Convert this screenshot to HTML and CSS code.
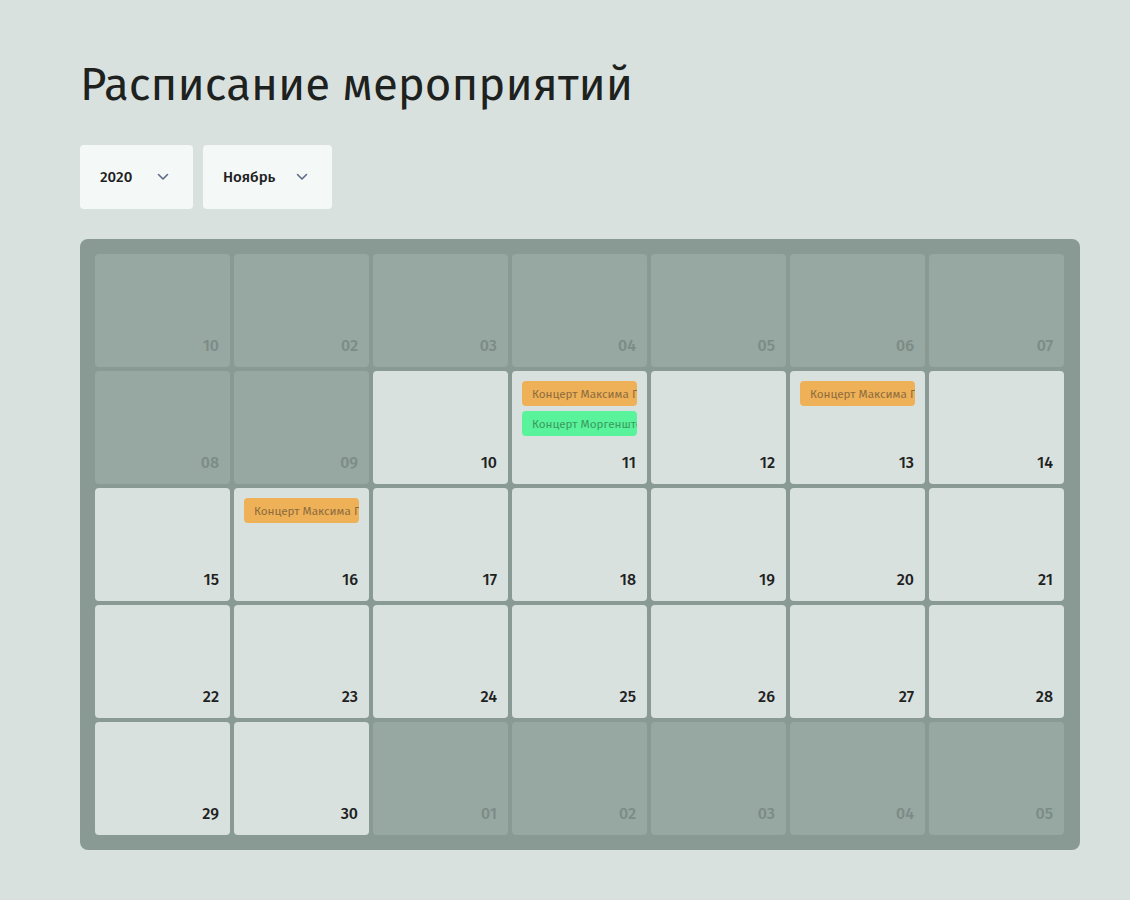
FILE: index.html
```html
<!DOCTYPE html>
<html lang="ru">
<head>
<meta charset="utf-8">
<title>Расписание мероприятий</title>
<link rel="stylesheet" href="styles.css">
</head>
<body>
<main class="page">
  <h1 class="title">Расписание мероприятий</h1>
  <div class="filters">
    <div class="select select-year"><span>2020</span>
      <svg class="chev" width="12" height="8" viewBox="0 0 12 8"><path d="M1.5 1.5 6 6l4.5-4.5" fill="none" stroke="currentColor" stroke-width="1.6" stroke-linecap="round" stroke-linejoin="round"/></svg>
    </div>
    <div class="select select-month"><span>Ноябрь</span>
      <svg class="chev" width="12" height="8" viewBox="0 0 12 8"><path d="M1.5 1.5 6 6l4.5-4.5" fill="none" stroke="currentColor" stroke-width="1.6" stroke-linecap="round" stroke-linejoin="round"/></svg>
    </div>
  </div>
  <div class="calendar">
    <div class="cell dim"><span class="num">10</span></div>
    <div class="cell dim"><span class="num">02</span></div>
    <div class="cell dim"><span class="num">03</span></div>
    <div class="cell dim"><span class="num">04</span></div>
    <div class="cell dim"><span class="num">05</span></div>
    <div class="cell dim"><span class="num">06</span></div>
    <div class="cell dim"><span class="num">07</span></div>

    <div class="cell dim"><span class="num">08</span></div>
    <div class="cell dim"><span class="num">09</span></div>
    <div class="cell"><span class="num">10</span></div>
    <div class="cell"><div class="event orange">Концерт Максима Галкина</div><div class="event green">Концерт Моргенштерна</div><span class="num">11</span></div>
    <div class="cell"><span class="num">12</span></div>
    <div class="cell"><div class="event orange">Концерт Максима Галкина</div><span class="num">13</span></div>
    <div class="cell"><span class="num">14</span></div>

    <div class="cell"><span class="num">15</span></div>
    <div class="cell"><div class="event orange">Концерт Максима Галкина</div><span class="num">16</span></div>
    <div class="cell"><span class="num">17</span></div>
    <div class="cell"><span class="num">18</span></div>
    <div class="cell"><span class="num">19</span></div>
    <div class="cell"><span class="num">20</span></div>
    <div class="cell"><span class="num">21</span></div>

    <div class="cell"><span class="num">22</span></div>
    <div class="cell"><span class="num">23</span></div>
    <div class="cell"><span class="num">24</span></div>
    <div class="cell"><span class="num">25</span></div>
    <div class="cell"><span class="num">26</span></div>
    <div class="cell"><span class="num">27</span></div>
    <div class="cell"><span class="num">28</span></div>

    <div class="cell"><span class="num">29</span></div>
    <div class="cell"><span class="num">30</span></div>
    <div class="cell dim"><span class="num">01</span></div>
    <div class="cell dim"><span class="num">02</span></div>
    <div class="cell dim"><span class="num">03</span></div>
    <div class="cell dim"><span class="num">04</span></div>
    <div class="cell dim"><span class="num">05</span></div>
  </div>
</main>
</body>
</html>
```

FILE: styles.css
```css
* { box-sizing: border-box; }
html, body { margin: 0; padding: 0; }
body {
  background: #d9e1df;
  font-family: "Fira Sans", Roboto, "Noto Sans", sans-serif;
  color: #1e221e;
}
.page {
  width: 1000px;
  margin-left: 80px;
  padding-top: 57px;
}
.title {
  margin: 0;
  font-size: 45.6px;
  font-weight: 400;
  line-height: 56px;
  color: #1e221e;
}
.filters {
  display: flex;
  gap: 10px;
  margin-top: 32px;
}
.select {
  height: 64px;
  background: #f4f8f7;
  border-radius: 4px;
  display: flex;
  align-items: center;
  padding-left: 20px;
  font-size: 15px;
  font-weight: 500;
  color: #1e221e;
}
.select-year { width: 113px; }
.select-month { width: 129px; }
.chev { color: #5b6b88; margin-left: auto; margin-right: 24px; }
.calendar {
  margin-top: 30px;
  background: #899a94;
  border-radius: 8px;
  padding: 15px 16px 15px 15px;
  display: grid;
  grid-template-columns: repeat(7, 135px);
  grid-auto-rows: 113px;
  gap: 4px;
}
.cell {
  background: #d9e1df;
  border-radius: 4px;
  padding: 10px 10px 0 10px;
  display: flex;
  flex-direction: column;
  gap: 5px;
  overflow: hidden;
}
.cell.dim { background: #97a7a1; }
.num {
  margin-top: auto;
  align-self: flex-end;
  font-size: 16px;
  font-weight: 500;
  line-height: 18px;
  margin-bottom: 12px;
  margin-right: 1px;
  color: #1e221e;
}
.dim .num { color: #7b8c86; }
.event {
  height: 25px;
  border-radius: 4px;
  font-size: 11.7px;
  font-weight: 400;
  line-height: 26px;
  padding-left: 10px;
  white-space: nowrap;
  overflow: hidden;
  flex-shrink: 0;
}
.event.orange { background: #efb157; color: #8c6c3e; }
.event.green { background: #58f39a; color: #3b9a5f; }
```
